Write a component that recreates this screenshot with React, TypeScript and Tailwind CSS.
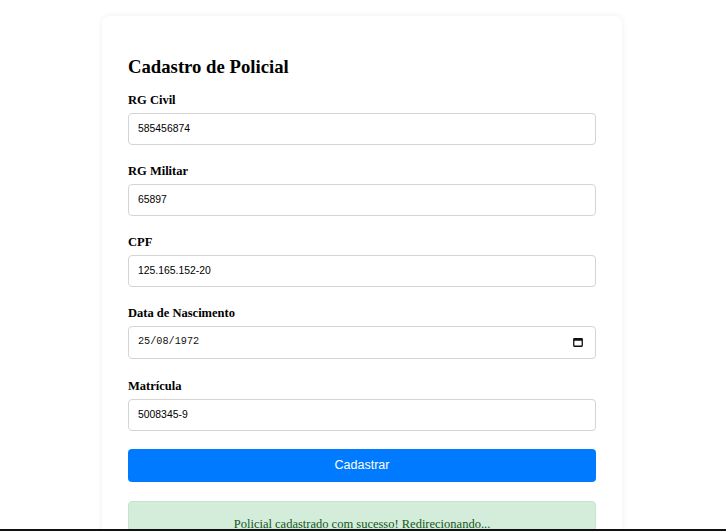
import { useState } from "react";

const fields = [
  { label: "RG Civil", value: "585456874" },
  { label: "RG Militar", value: "65897" },
  { label: "CPF", value: "125.165.152-20" },
];

function CalendarIcon() {
  return (
    <svg width="10" height="10" viewBox="0 0 10 10" fill="none" className="text-[#111]">
      <rect x="0.75" y="1.75" width="8.5" height="7.5" rx="0.5" stroke="currentColor" strokeWidth="1.3" />
      <rect x="0.75" y="1.75" width="8.5" height="2" fill="currentColor" />
    </svg>
  );
}

function Field({ label, children }: { label: string; children: React.ReactNode }) {
  return (
    <div className="flex flex-col mb-[19px]">
      <label className="text-[12.5px] font-bold leading-[14px] mb-[6px] text-black">{label}</label>
      {children}
    </div>
  );
}

export default function App() {
  const [values, setValues] = useState<Record<string, string>>({
    "RG Civil": "585456874",
    "RG Militar": "65897",
    CPF: "125.165.152-20",
    Matricula: "5008345-9",
  });

  const inputCls =
    "h-[32px] w-full rounded-[4px] border border-[#d4d4d4] bg-white pl-[9px] text-[10.4px] text-black outline-none font-['Liberation_Sans',Arial,sans-serif]";

  return (
    <div className="min-h-screen bg-white pr-[2px] font-['Liberation_Serif','Times_New_Roman',serif]">
      <div className="mx-auto mt-4 w-[520px] rounded-[8px] bg-white px-[26px] pt-[40px] pb-4 shadow-[0_0_7px_rgba(0,0,0,0.07)]">
        <h2 className="text-[18.72px] font-bold leading-[21.5px] text-black mb-[15px]">Cadastro de Policial</h2>

        {fields.map((f) => (
          <Field key={f.label} label={f.label}>
            <input
              className={inputCls}
              value={values[f.label]}
              onChange={(e) => setValues({ ...values, [f.label]: e.target.value })}
            />
          </Field>
        ))}

        <div className="flex flex-col mb-[20px]">
          <label className="text-[12.5px] font-bold leading-[14px] mb-[6px] text-black">Data de Nascimento</label>
          <div className="flex h-[33px] w-full items-center justify-between rounded-[4px] border border-[#d4d4d4] bg-white pl-[9px] pr-[12px]">
            <span className="text-[10.2px] text-[#111] font-['Liberation_Mono','Courier_New',monospace]">25/08/1972</span>
            <CalendarIcon />
          </div>
        </div>

        <Field label="Matrícula">
          <input
            className={inputCls}
            value={values.Matricula}
            onChange={(e) => setValues({ ...values, Matricula: e.target.value })}
          />
        </Field>

        <button className="-mt-px h-[33px] w-full rounded-[4px] bg-[#007bff] text-[12.5px] text-white font-['Liberation_Sans',Arial,sans-serif]">
          Cadastrar
        </button>

        <div className="mt-[19px] rounded-[4px] border border-[#c3e6cb] bg-[#d4edda] pt-[13px] pb-[13px] text-center text-[12.5px] text-[#155724]">
          Policial cadastrado com sucesso! Redirecionando...
        </div>
      </div>
      <div className="fixed inset-x-0 bottom-0 h-[2px] bg-[#111]" />
    </div>
  );
}
